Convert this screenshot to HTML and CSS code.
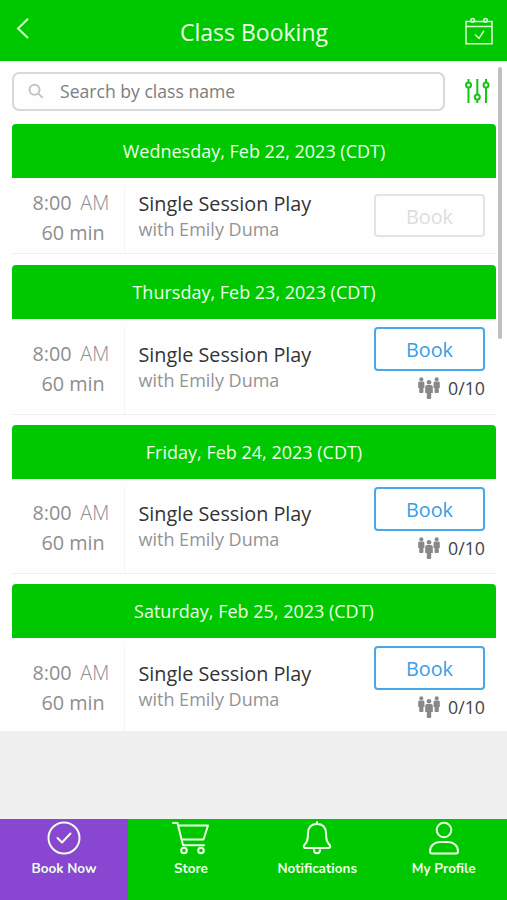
FILE: index.html
```html
<!DOCTYPE html>
<html lang="en">
<head>
<meta charset="utf-8">
<title>Class Booking</title>
<link rel="stylesheet" href="styles.css">
</head>
<body>
<svg width="0" height="0" class="defs">
  <symbol id="people" viewBox="0 0 22 23">
    <g id="person"><circle cx="3.3" cy="2.3" r="2"/><path d="M1.600 4.500h3.400q1.400 0 1.400 1.400v5H5.400v4.200q0 .9-.9.9h-2.400q-.9 0-.9-.9v-4.200H.2v-5q0-1.400 1.400-1.400z"/></g>
    <use href="#person" x="15.4"/>
    <circle cx="11" cy="5.200" r="2.300"/><path d="M9 8h4q1.800 0 1.800 1.700v6.300h-1.600v5q0 1-1 1H9.800q-1 0-1-1v-5H7.200V9.700q0-1.700 1.800-1.700z"/>
  </symbol>
</svg>
<div class="app">
  <header class="topbar">
    <svg class="back" width="14" height="24" viewBox="0 0 14 24"><path d="M12 2.800 2 12.500 12 22"/></svg>
    <h1>Class Booking</h1>
    <svg class="calendar" width="28" height="28" viewBox="0 0 28 28"><path d="M1 4.500h26v22.300H1zM1 9.500h26M10 17.500l4 3.800 5-7.600"/><circle cx="7.700" cy="3.300" r="1.800"/><circle cx="20.500" cy="3.300" r="1.800"/></svg>
  </header>
  <main class="content">
    <div class="searchrow">
      <div class="search">
        <svg width="16" height="16" viewBox="0 0 16 16"><circle cx="6.500" cy="6.700" r="5"/><path d="m10.200 10.400 4.500 4.500"/></svg>
        <span>Search by class name</span>
      </div>
      <svg class="filter" width="26" height="26" viewBox="0 0 26 26"><path d="M4.500 1v3M4.500 10v15M13.300 1v15M13.300 22v3M22 1v3M22 10v15"/><circle cx="4.500" cy="7" r="2.500"/><circle cx="13.300" cy="19" r="2.500"/><circle cx="22" cy="7" r="2.500"/></svg>
    </div>
    <section class="day short">
      <h2>Wednesday, Feb 22, 2023 (CDT)</h2>
      <div class="session">
        <div class="time"><div>8:00 <span class="ampm">AM</span></div><div class="dur">60 min</div></div>
        <div class="info"><div class="name">Single Session Play</div><div class="coach">with Emily Duma</div></div>
        <div class="action"><div class="book off">Book</div></div>
      </div>
    </section>
    <section class="day tall">
      <h2>Thursday, Feb 23, 2023 (CDT)</h2>
      <div class="session">
        <div class="time"><div>8:00 <span class="ampm">AM</span></div><div class="dur">60 min</div></div>
        <div class="info"><div class="name">Single Session Play</div><div class="coach">with Emily Duma</div></div>
        <div class="action"><div class="book">Book</div><div class="count"><svg width="22" height="23"><use href="#people"/></svg><span>0/10</span></div></div>
      </div>
    </section>
    <section class="day">
      <h2>Friday, Feb 24, 2023 (CDT)</h2>
      <div class="session">
        <div class="time"><div>8:00 <span class="ampm">AM</span></div><div class="dur">60 min</div></div>
        <div class="info"><div class="name">Single Session Play</div><div class="coach">with Emily Duma</div></div>
        <div class="action"><div class="book">Book</div><div class="count"><svg width="22" height="23"><use href="#people"/></svg><span>0/10</span></div></div>
      </div>
    </section>
    <section class="day last">
      <h2>Saturday, Feb 25, 2023 (CDT)</h2>
      <div class="session">
        <div class="time"><div>8:00 <span class="ampm">AM</span></div><div class="dur">60 min</div></div>
        <div class="info"><div class="name">Single Session Play</div><div class="coach">with Emily Duma</div></div>
        <div class="action"><div class="book">Book</div><div class="count"><svg width="22" height="23"><use href="#people"/></svg><span>0/10</span></div></div>
      </div>
    </section>
    <div class="scrollbar"></div>
  </main>
  <nav class="tabs">
    <div class="tab active"><svg width="38" height="34" viewBox="0 0 38 34"><circle cx="19" cy="17" r="15.500"/><path d="m12.500 17 4.500 4.500 8.500-9"/></svg><span>Book Now</span></div>
    <div class="tab"><svg width="38" height="34" viewBox="0 0 38 34"><path d="M1 2h4.500l5.500 22.300h21M7 4.500h29l-4.500 14H10"/><circle cx="12" cy="29.500" r="2.800"/><circle cx="29" cy="29.500" r="2.800"/></svg><span>Store</span></div>
    <div class="tab"><svg width="38" height="34" viewBox="0 0 38 34"><path d="M19 1v2M19 3q-8.500 0-9 9c0 7-1 9-4 12.500q-.800 2.500 1.500 2.500h23q2.300 0 1.500-2.500c-3-3.500-4-5.500-4-12.500q-.500-9-9-9zM16 29q0 3.200 3 3.200t3-3.200"/></svg><span>Notifications</span></div>
    <div class="tab"><svg width="38" height="34" viewBox="0 0 38 34"><circle cx="19" cy="9" r="7.300"/><path d="M7 32.500q-2 0-2-2c0-6 4.500-9.500 10-9.500h8c5.500 0 10 3.500 10 9.500q0 2-2 2z"/></svg><span>My Profile</span></div>
  </nav>
</div>
</body>
</html>
```
FILE: styles.css
```css
* { box-sizing: border-box; }
body { margin: 0; font-family: "Open Sans", sans-serif; background: #f0f0f0; }
.defs { position: absolute; }
svg { display: block; flex: none; overflow: visible; }
.app { height: 900px; display: flex; flex-direction: column; }
.topbar { height: 61.400px; background: #00c800; color: #edffe9; display: flex; align-items: center; justify-content: space-between; padding: 0 14px 0 17px; }
.topbar svg { fill: none; stroke: #dcffd5; stroke-width: 1.500; }
.topbar .back { stroke-width: 2; margin: -5px 14px 0 -1px; }
.topbar h1 { margin: 2px 0 0 -1px; font-size: 23px; line-height: 32px; font-weight: 400; }
.content { position: relative; background: #fefefe; height: 669.600px; padding: 10.600px 11px 0 12px; }
.searchrow { display: flex; height: 39px; justify-content: space-between; align-items: center; padding-right: 6px; }
.search { width: 433px; height: 39px; border: 2px solid #d8d8d8; border-radius: 7px; display: flex; align-items: center; padding-left: 14px; gap: 16px; color: #7d7d7d; font-size: 17.600px; }
.search svg { fill: none; stroke: #c3c3c3; stroke-width: 2; }
.filter { fill: none; stroke: #16c416; stroke-width: 2; }
.day { height: 159px; }
.searchrow + .day { margin-top: 12.600px; }
.day.short { height: 141.500px; }
.day.tall { height: 160.300px; }
.day h2 { margin: 0; height: 54px; line-height: 54px; background: #00c800; color: #edffe9; font-size: 18px; font-weight: 400; text-align: center; border-radius: 4px 4px 0 0; }
.session { height: 94.500px; display: flex; border-bottom: 1.500px solid #eef1f2; padding-top: 8px; }
.short .session { height: 76px; }
.tall .session { height: 95.500px; }
.last .session { border-bottom: 0; height: 93px; }
.time { width: 113px; border-right: 1px solid #f3f3f3; color: #8e8e8e; font-size: 19.800px; line-height: 30px; padding: 11px 14px 0 20.500px; white-space: nowrap; }
.info { flex: 1; padding: 12px 0 0 13.500px; white-space: nowrap; }
.short .time { padding-top: 2.500px; }
.short .info { padding-top: 3.500px; }
.tall .time { padding-top: 12px; }
.tall .info { padding-top: 13px; }
.last .time { padding-top: 12px; }
.last .info { padding-top: 13px; }
.ampm { font-weight: 300; margin-left: 3.500px; }
.dur { padding-left: 9px; }
.name { font-size: 19.800px; line-height: 30px; color: #333; }
.coach { font-size: 18px; line-height: 22px; margin-top: -1px; color: #949494; }
.action { width: 111px; margin-right: 11px; }
.short .action { padding-top: 8px; }
.book { height: 43.500px; border: 2px solid #48a9e8; border-radius: 4px; color: #369fe7; font-size: 19.800px; line-height: 41px; text-align: center; }
.book.off { border: 2px solid #e2e3e4; color: #dcdddf; }
.count { display: flex; justify-content: flex-end; gap: 8px; align-items: center; font-size: 17.800px; line-height: 24px; color: #444; margin-top: 5px; }
.count svg { fill: #888; position: relative; top: 1px; }
.scrollbar { position: absolute; top: 6px; right: 5px; width: 4px; height: 272px; background: #bfbfbf; border-radius: 2px; }
.tabs { margin-top: auto; height: 81px; display: grid; grid-template-columns: 128px 126px 126.500px 126.500px; background: #00c800; }
.tab { display: flex; flex-direction: column; align-items: center; padding-top: 2px; color: #edffe9; font: 700 13.500px/20px Nunito, "Open Sans", sans-serif; }
.tab span { margin-top: 4px; }
.tab svg { fill: none; stroke: #edffe9; stroke-width: 2; stroke-linecap: round; stroke-linejoin: round; }
.tab.active { background: #8946d1; }
```
